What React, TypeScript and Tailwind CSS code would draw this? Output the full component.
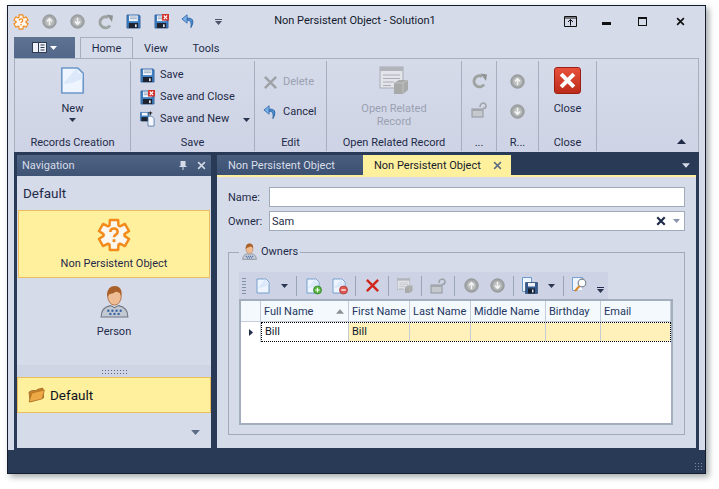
import type { ReactNode } from 'react';

// six-lobed gear outline used for the app logo and the nav item
const gearPath = (() => {
  const pts: string[] = [];
  for (let i = 0; i < 6; i++) {
    const a = (i * Math.PI) / 3 - Math.PI / 2;
    const step = [[-0.44, 7.4], [-0.27, 11], [0.27, 11], [0.44, 7.4]] as const;
    step.forEach(([d, r]) => {
      pts.push(`${(12 + Math.cos(a + d) * r).toFixed(2)} ${(12 + Math.sin(a + d) * r).toFixed(2)}`);
    });
  }
  return 'M' + pts.join('L') + 'Z';
})();

function Gear({ size }: { size: number }) {
  return (
    <svg width={size} height={size} viewBox="0 0 24 24">
      <path d={gearPath} fill="#fbf6ee" stroke="#f28a1c" strokeWidth="1.7" strokeLinejoin="round" />
      <path d="M9.400 9.800c0-3.200 5.200-3.200 5.200 0 0 2-2.600 1.900-2.600 3.700" fill="none" stroke="#f28a1c" strokeWidth="1.8" />
      <rect x="11" y="15" width="2" height="2" fill="#f28a1c" />
    </svg>
  );
}

function Floppy({ size = 16, x = false }: { size?: number; x?: boolean }) {
  return (
    <svg width={size} height={size} viewBox="0 0 16 16">
      <path d="M1 1h13l1 1v13H1z" fill="#3f7fc4" stroke="#2b5c95" strokeWidth="0.8" />
      <rect x="3.200" y="1.600" width="9.400" height="6" fill="#f3f6fb" />
      <path d="M4 3.200h7.600M4 5h7.600" stroke="#7e93ad" strokeWidth="0.8" />
      <rect x="3" y="9.600" width="10" height="5.400" fill="#1d2430" />
      <rect x="9.600" y="11" width="1.800" height="3" fill="#d9e2ee" />
      {x && (
        <>
          <rect x="8.600" y="0" width="7.400" height="7" fill="#d3302a" />
          <path d="M10.400 1.600l3.600 3.800M14 1.600l-3.600 3.800" stroke="#fff" strokeWidth="1.200" />
        </>
      )}
    </svg>
  );
}

function SaveNew() {
  return (
    <svg width="16" height="16" viewBox="0 0 16 16">
      <path d="M0.500 1h9v9h-9z" fill="#3f7fc4" stroke="#2b5c95" strokeWidth="0.600" />
      <rect x="2" y="1.400" width="6" height="3" fill="#f3f6fb" />
      <rect x="1.500" y="6" width="7" height="4.400" fill="#1d2430" />
      <path d="M8.500 5h4l2.500 2.500V15.500H8.500z" fill="#f4f8fe" stroke="#3f6c9e" strokeWidth="0.800" />
      <path d="M9 1.500h4M11 0v4" stroke="#111" strokeWidth="1" />
    </svg>
  );
}

function DocFloppy() {
  return (
    <svg width="16" height="17" viewBox="0 0 16 17">
      <path d="M0.500 0.500h9v14h-9z" fill="#eef5fe" stroke="#6b98c9" />
      <path d="M3.500 5.500H15.500v11H3.500z" fill="#35598c" stroke="#1f3a63" strokeWidth="0.600" />
      <rect x="6" y="6" width="7" height="3.500" fill="#eef2f8" />
      <rect x="6" y="11.500" width="7" height="5" fill="#16202f" />
      <rect x="10" y="12.500" width="1.500" height="3" fill="#d9e2ee" />
    </svg>
  );
}

function RoundArrow({ up, size = 15 }: { up: boolean; size?: number }) {
  return (
    <svg width={size} height={size} viewBox="0 0 16 16">
      <circle cx="8" cy="8" r="7.200" fill="#a3a6a6" stroke="#8b8e8f" strokeWidth="0.800" />
      <circle cx="8" cy="8" r="4.600" fill="#bcbfbf" />
      <path d={up ? 'M8 12V5.500M5.300 8L8 5l2.700 3' : 'M8 4v6.500M5.300 8L8 11l2.700-3'} fill="none" stroke="#f3f3f3" strokeWidth="1.600" />
    </svg>
  );
}

function Redo({ size = 16 }: { size?: number }) {
  return (
    <svg width={size} height={size} viewBox="0 0 16 16">
      <path d="M13 11.500A5.500 5.500 0 1 1 11 3.400" fill="none" stroke="#9ea2a1" strokeWidth="3" />
      <path d="M9.500 0.500L16 1.500l-1 6.500z" fill="#8f9392" />
    </svg>
  );
}

function Undo({ size = 16 }: { size?: number }) {
  return (
    <svg width={size} height={size} viewBox="0 0 16 16">
      <path d="M3 4.500h5.500c4.500 0 5.500 4.500 2 10 0 0 1-4-.5-6.500-.8-1.300-3-1.200-5-1.200" fill="#4f8fd6" stroke="#28609f" strokeWidth="1" strokeLinejoin="round" />
      <path d="M6.500 0.800L1 5.300l5.500 4.500z" fill="#7ab0ea" stroke="#28609f" strokeWidth="0.800" strokeLinejoin="round" />
    </svg>
  );
}

function Caret({ color = '#2a3650', w = 7, dim = 4, up }: { color?: string; w?: number; dim?: number; up?: boolean }) {
  return (
    <svg width={w} height={dim} viewBox="0 0 7 4">
      <path d={up ? 'M0 4h7L3.500 0z' : 'M0 0h7L3.500 4z'} fill={color} />
    </svg>
  );
}

function Doc({ w = 14, h = 16, badge }: { w?: number; h?: number; badge?: 'add' | 'del' }) {
  return (
    <svg width={w} height={h} viewBox="0 0 14 16" className="overflow-visible">
      <path d="M1 1h9l3 3v11H1z" fill="#eef5fe" stroke="#6b98c9" strokeWidth="0.900" strokeLinejoin="round" />
      <path d="M1.500 10L9 1.500h1V4h2.500v3C9 9 5 10 1.500 10z" fill="#dbe9fa" />
      {badge === 'add' && (
        <>
          <circle cx="11.500" cy="12" r="4" fill="#57b53e" stroke="#2c7a22" strokeWidth="0.700" />
          <path d="M9.300 12h4.400M11.500 9.800v4.400" stroke="#fff" strokeWidth="1.100" />
        </>
      )}
      {badge === 'del' && (
        <>
          <circle cx="11.500" cy="12" r="4" fill="#dd5a52" stroke="#a72e28" strokeWidth="0.700" />
          <path d="M9.300 12h4.400" stroke="#fff" strokeWidth="1.300" />
        </>
      )}
    </svg>
  );
}

function Person({ size }: { size: number }) {
  return (
    <svg width={size} height={size} viewBox="0 0 32 32">
      <path d="M3 31c0-7 4-10 9-11l4 2 4-2c5 1 9 4 9 11z" fill="#c3c9d2" stroke="#6e7682" strokeWidth="1" />
      <g fill="#3d68a8">
        <circle cx="10" cy="25" r="1.200" />
        <circle cx="14" cy="25" r="1.200" />
        <circle cx="18" cy="25" r="1.200" />
        <circle cx="22" cy="25" r="1.200" />
        <circle cx="12" cy="28" r="1.200" />
        <circle cx="16" cy="28" r="1.200" />
        <circle cx="20" cy="28" r="1.200" />
      </g>
      <ellipse cx="16" cy="11" rx="6.500" ry="8.500" fill="#efbd93" stroke="#a8673a" strokeWidth="0.800" />
      <path d="M9 12C8 4 12 1 16.500 1 21 1 24 5 22.500 11 22 7 19 6.500 17 6.500c-2 2-5 2-6 2.500-1 1-2 3-2 3z" fill="#a9602a" />
    </svg>
  );
}

function Folder() {
  return (
    <svg width="17" height="16" viewBox="0 0 17 16">
      <path d="M1 5l3-1.500h4l1-1 5.500-1.500 1 2v8L2 15z" fill="#c67d28" stroke="#8a5518" strokeWidth="0.600" />
      <path d="M1 15L4 6l12.500-3L14 12z" fill="#eda945" stroke="#a76b1e" strokeWidth="0.600" />
    </svg>
  );
}

function RelatedIcon({ size = 30 }: { size?: number }) {
  return (
    <svg width={size} height={size} viewBox="0 0 30 30">
      <rect x="1" y="1" width="23" height="21" fill="#e3e5ea" stroke="#a7abb3" />
      <rect x="1" y="1" width="23" height="4" fill="#b1b5bb" />
      <path d="M4 9h17M4 12.500h17M4 16h11M4 19.500h8" stroke="#a9adb4" strokeWidth="1" />
      <path d="M15 17l5-3h9v10l-5 4h-9z" fill="#a7aaa9" />
      <path d="M15 17h9v11M24 17l5-3" fill="none" stroke="#c7c9c9" strokeWidth="0.800" />
    </svg>
  );
}

function LinkBox({ size = 16 }: { size?: number }) {
  return (
    <svg width={size} height={size} viewBox="0 0 16 16">
      <rect x="1" y="7" width="11" height="8" fill="#c5c8cd" stroke="#92969c" />
      <rect x="1" y="7" width="11" height="2" fill="#a4a7ad" />
      <path d="M9 5c0-5 6-5 6-1 0 2-2 2.500-3 2.500" fill="none" stroke="#9da1a5" strokeWidth="1.500" />
    </svg>
  );
}

function BigX({ size, color, weight = 2.6 }: { size: number; color: string; weight?: number }) {
  return (
    <svg width={size} height={size} viewBox="0 0 16 16">
      <path d="M2 2l12 12M14 2L2 14" stroke={color} strokeWidth={weight} />
    </svg>
  );
}

function Magnifier() {
  return (
    <svg width="16" height="17" viewBox="0 0 16 17">
      <path d="M0.500 0.500h10v3M0.500 0.500v13h5" fill="#f3f8fe" stroke="#6b98c9" strokeWidth="0.900" />
      <rect x="1" y="1" width="9" height="12" fill="#eef5fe" />
      <circle cx="10" cy="6" r="3.800" fill="#fff" stroke="#7d8590" strokeWidth="1.200" />
      <path d="M7.500 9L3 14" stroke="#d98a2a" strokeWidth="2" />
    </svg>
  );
}

function RibbonGroup({ w, label, children }: { w: number; label: string; children?: ReactNode }) {
  return (
    <div className="mt-[2px] flex h-[90px] shrink-0 flex-col border-r border-[#a5afbd]" style={{ width: w }}>
      <div className="flex-1">{children}</div>
      <div className="h-[17px] whitespace-nowrap pt-[1px] text-center leading-[16px]">{label}</div>
    </div>
  );
}

function RowBtn({ icon, label, dim, trail }: { icon: ReactNode; label: string; dim?: boolean; trail?: boolean }) {
  return (
    <div className={`flex h-[22px] items-center gap-[5px] whitespace-nowrap ${dim ? 'text-[#9aa1b1]' : ''}`}>
      <span className="flex w-[15px] justify-center">{icon}</span>
      <span>{label}</span>
      {trail && <span className="ml-[9px] mt-[1px] flex"><Caret /></span>}
    </div>
  );
}

function Sep() {
  return <div className="mx-[8px] h-[20px] w-px bg-[#9aa5b4]" />;
}

function ToolCell({ w, children }: { w: number; children: ReactNode }) {
  return <div className="flex items-center justify-center" style={{ width: w }}>{children}</div>;
}

const columns = [
  { title: 'Full Name', w: 88, sort: true },
  { title: 'First Name', w: 61 },
  { title: 'Last Name', w: 61 },
  { title: 'Middle Name', w: 75 },
  { title: 'Birthday', w: 55 },
  { title: 'Email', w: 70 },
];

export default function App() {
  return (
    <div className="h-[489px] w-[719px] overflow-hidden bg-white pl-[7px] pt-[5px] font-['Roboto',sans-serif] text-[11px] text-[#1f2b49]">
      <div className="flex h-[469px] w-[699px] flex-col border border-[#141d2c] bg-[#d6dbea] shadow-[3px_3px_6px_rgba(60,70,70,0.45)]">
        {/* Title bar */}
        <div className="flex h-[31px] shrink-0 items-center pl-[5px]">
          <div className="flex w-[16px] justify-center"><Gear size={18} /></div>
          <div className="ml-[6px] flex items-center">
            <ToolCell w={28}><RoundArrow up /></ToolCell>
            <ToolCell w={28}><RoundArrow up={false} /></ToolCell>
            <ToolCell w={28}><Redo /></ToolCell>
            <ToolCell w={28}><Floppy size={15} /></ToolCell>
            <ToolCell w={28}><Floppy size={15} x /></ToolCell>
            <ToolCell w={26}><Undo size={15} /></ToolCell>
            <ToolCell w={34}>
              <div className="flex flex-col gap-[1px]">
                <div className="h-px w-[7px] bg-[#4b5567]" />
                <Caret color="#4b5567" />
              </div>
            </ToolCell>
          </div>
          <div className="ml-[37px] w-[166px] whitespace-nowrap text-center text-[#111a2c]">Non Persistent Object - Solution1</div>
          <div className="ml-[114px] flex items-center text-[#111]">
            <ToolCell w={36}>
              <svg width="13" height="11" viewBox="0 0 13 11">
                <path d="M0.500 0.500h12v10H.5zM0 2h13M6.500 9.500V3.500M4 6l2.500-2.500L9 6" fill="none" stroke="#111" />
              </svg>
            </ToolCell>
            <ToolCell w={36}><div className="mt-[3px] h-[3px] w-[9px] bg-[#111]" /></ToolCell>
            <ToolCell w={36}><div className="h-[9px] w-[9px] border border-t-2 border-[#111]" /></ToolCell>
            <ToolCell w={40}><BigX size={9} color="#111" weight={3} /></ToolCell>
          </div>
        </div>

        {/* Tabs */}
        <div className="flex h-[21px] shrink-0 pl-[6px]">
          <div className="flex w-[61px] items-center justify-center gap-[3px] bg-gradient-to-b from-[#5f7392] to-[#52678a]">
            <svg width="15" height="11" viewBox="0 0 15 11">
              <rect x="0.500" y="0.500" width="14" height="10" fill="#eef1f7" stroke="#2c3a52" />
              <path d="M6.500 0.500v10M8.500 3h4M8.500 5.500h4M8.500 8h4" stroke="#2c3a52" />
            </svg>
            <Caret color="#fff" />
          </div>
          <div className="ml-[5px] flex w-[53px] items-center justify-center border border-b-0 border-[#a5afbd] bg-[#d6dbea] pt-[3px]">Home</div>
          <div className="flex w-[46px] items-center justify-center pt-[3px]">View</div>
          <div className="flex w-[54px] items-center justify-center pt-[3px]">Tools</div>
        </div>

        {/* Ribbon */}
        <div className="mx-[6px] flex h-[94px] shrink-0 border-x border-t border-[#a5afbd] bg-gradient-to-b from-[#d6dbea] to-[#ced3e5]">
          <RibbonGroup w={116} label="Records Creation">
            <div className="flex flex-col items-center pt-[5px]">
              <Doc w={25} h={29} />
              <div className="mt-[7px] leading-[14px]">New</div>
              <div className="mt-[2px] flex"><Caret /></div>
            </div>
          </RibbonGroup>
          <RibbonGroup w={124} label="Save">
            <div className="pl-[9px] pt-[3px]">
              <RowBtn icon={<Floppy size={15} />} label="Save" />
              <RowBtn icon={<Floppy size={15} x />} label="Save and Close" />
              <RowBtn icon={<SaveNew />} label="Save and New" trail />
            </div>
          </RibbonGroup>
          <RibbonGroup w={72} label="Edit">
            <div className="pl-[8px] pt-[10px]">
              <div className="h-[30px]"><RowBtn icon={<BigX size={15} color="#9ea2a6" />} label="Delete" dim /></div>
              <RowBtn icon={<Undo size={15} />} label="Cancel" />
            </div>
          </RibbonGroup>
          <RibbonGroup w={135} label="Open Related Record">
            <div className="flex flex-col items-center pt-[5px] leading-[13px] text-[#9aa1b1]">
              <RelatedIcon />
              <div className="mt-[6px]">Open Related</div>
              <div>Record</div>
            </div>
          </RibbonGroup>
          <RibbonGroup w={35} label="...">
            <div className="flex flex-col items-center gap-[13px] pt-[12px]">
              <Redo />
              <LinkBox />
            </div>
          </RibbonGroup>
          <RibbonGroup w={42} label="R...">
            <div className="flex flex-col items-center gap-[15px] pt-[13px]">
              <RoundArrow up />
              <RoundArrow up={false} />
            </div>
          </RibbonGroup>
          <RibbonGroup w={58} label="Close">
            <div className="flex flex-col items-center pt-[6px]">
              <div className="flex h-[27px] w-[27px] items-center justify-center rounded-[3px] border border-[#9c1e12] bg-gradient-to-b from-[#e8513c] to-[#bc2a18]">
                <BigX size={17} color="#fff" weight={3.8} />
              </div>
              <div className="mt-[8px] leading-[14px]">Close</div>
            </div>
          </RibbonGroup>
          <div className="flex flex-1 items-end justify-end pb-[8px] pr-[12px]">
            <svg width="9" height="5" viewBox="0 0 9 5"><path d="M0 5h9L4.500 0z" fill="#1f2b49" /></svg>
          </div>
        </div>

        {/* Main area */}
        <div className="mx-[6px] flex min-h-0 flex-1 gap-[6px] bg-[#293a56] px-[3px] pb-[2px] pt-[3px]">
          {/* Navigation */}
          <div className="flex w-[194px] shrink-0 flex-col bg-[#d6dbea]">
            <div className="flex h-[21px] items-center justify-between bg-gradient-to-b from-[#506584] to-[#3f5475] pl-[5px] pr-[5px] text-[#d5dbe8]">
              <span className="pt-[2px]">Navigation</span>
              <div className="flex items-center gap-[10px]">
                <svg width="8" height="9" viewBox="0 0 8 9">
                  <path d="M1.500 0h5v5h1v1H4.500v3h-1V6H.5V5h1z" fill="#d5dbe8" />
                </svg>
                <BigX size={9} color="#d5dbe8" />
              </div>
            </div>
            <div className="flex h-[34px] shrink-0 items-center pl-[6px] pt-[2px] text-[13.5px] leading-none">Default</div>
            <div className="mx-px flex h-[68px] shrink-0 flex-col items-center border border-[#e9bd5d] bg-[#fff09d] pt-[7px]">
              <Gear size={34} />
              <div className="mt-[5px] leading-[14px]">Non Persistent Object</div>
            </div>
            <div className="flex h-[87px] shrink-0 flex-col items-center pt-[7px]">
              <Person size={33} />
              <div className="mt-[7px] leading-[14px]">Person</div>
            </div>
            <div className="flex h-[12px] shrink-0 items-center justify-center bg-[#d0d5e6]">
              <div className="h-[5px] w-[26px] bg-[radial-gradient(#5d6a80_0.7px,transparent_0.8px)] bg-[length:3px_3px]" />
            </div>
            <div className="flex h-[36px] shrink-0 items-center gap-[5px] border border-[#e9bd5d] bg-[#fff09d] pl-[10px] text-[13.5px] text-[#0c1220]">
              <Folder />
              <span>Default</span>
            </div>
            <div className="flex flex-1 justify-end pr-[11px] pt-[17px]">
              <Caret color="#5b6a85" w={9} dim={5} />
            </div>
          </div>

          {/* Document */}
          <div className="flex w-[479px] shrink-0 flex-col">
            <div className="flex h-[20px] shrink-0">
              <div className="flex w-[146px] items-center bg-gradient-to-b from-[#4a5e7e] to-[#3c5072] pl-[11px] pt-[3px] text-[#d8deea]">Non Persistent Object</div>
              <div className="flex w-[148px] items-center justify-between bg-[#fff09d] pl-[11px] pr-[9px] text-[#141c2e]">
                <span className="pt-[3px]">Non Persistent Object</span>
                <BigX size={9} color="#5b6a85" />
              </div>
              <div className="flex flex-1 items-center justify-end pr-[6px]">
                <Caret color="#d5dbe8" w={8} dim={5} />
              </div>
            </div>
            <div className="flex min-h-0 flex-1 flex-col border-t-2 border-[#fff09d] bg-[#d6dbea] pl-[11px] pr-[11px] pt-[10px]">
              <div className="flex h-[20px] items-center">
                <div className="w-[41px] pt-[3px]">Name:</div>
                <div className="h-full flex-1 border border-[#9fabb9] bg-white" />
              </div>
              <div className="mt-[4px] flex h-[20px] items-center">
                <div className="w-[41px] pt-[3px]">Owner:</div>
                <div className="flex h-full flex-1 items-center border border-[#9fabb9] bg-white pl-[2px] pr-[4px]">
                  <span className="flex-1 pt-[3px]">Sam</span>
                  <BigX size={10} color="#1f2b49" weight={3.4} />
                  <span className="ml-[7px] flex"><Caret color="#8592a8" /></span>
                </div>
              </div>

              {/* Owners group */}
              <div className="mt-[21px] h-[183px] w-[457px] border border-[#9fabb9] px-[10px] pt-[19px]">
                <div className="-mt-[30px] mb-[12px] flex h-[18px] w-fit items-center gap-[3px] bg-[#d6dbea] px-[2px]">
                  <Person size={17} />
                  <span className="pt-[3px]">Owners</span>
                </div>
                <div className="flex h-[27px] w-[369px] items-center bg-[#cdd2e4] pl-[3px]">
                  <div className="h-[18px] w-[4px] bg-[radial-gradient(#8391a6_0.7px,transparent_0.8px)] bg-[length:2px_3px]" />
                  <ToolCell w={34}><Doc /></ToolCell>
                  <ToolCell w={8}><Caret /></ToolCell>
                  <Sep />
                  <ToolCell w={16}><Doc badge="add" /></ToolCell>
                  <div className="w-[10px]" />
                  <ToolCell w={16}><Doc badge="del" /></ToolCell>
                  <Sep />
                  <ToolCell w={16}><BigX size={15} color="#d0261d" /></ToolCell>
                  <Sep />
                  <ToolCell w={16}><RelatedIcon size={16} /></ToolCell>
                  <Sep />
                  <ToolCell w={16}><LinkBox /></ToolCell>
                  <Sep />
                  <ToolCell w={16}><RoundArrow up /></ToolCell>
                  <div className="w-[10px]" />
                  <ToolCell w={16}><RoundArrow up={false} /></ToolCell>
                  <Sep />
                  <ToolCell w={16}><DocFloppy /></ToolCell>
                  <div className="w-[9px]" />
                  <ToolCell w={8}><Caret /></ToolCell>
                  <Sep />
                  <ToolCell w={16}><Magnifier /></ToolCell>
                  <div className="ml-[9px] mt-[8px] flex flex-col gap-[1px]">
                    <div className="h-px w-[7px] bg-[#1f2b49]" />
                    <Caret />
                  </div>
                </div>

                {/* Grid */}
                <div className="h-[126px] w-[434px] border-2 border-[#a3aebc] bg-white">
                  <div className="flex h-[21px] bg-[#f4f9fe]">
                    <div className="w-[20px] border-b border-r border-[#c4ccd8]" />
                    {columns.map((c) => (
                      <div
                        key={c.title}
                        className="flex items-center justify-between border-b border-r border-[#c4ccd8] pl-[3px] pr-[4px] text-[#25365f]"
                        style={{ width: c.w }}
                      >
                        <span className="whitespace-nowrap pt-[3px]">{c.title}</span>
                        {c.sort && <Caret color="#8a8f96" w={8} dim={5} up />}
                      </div>
                    ))}
                  </div>
                  <div className="flex h-[20px]">
                    <div className="flex w-[20px] items-center justify-center border-r border-[#c4ccd8]">
                      <svg width="4" height="7" viewBox="0 0 4 7"><path d="M0 0l4 3.500L0 7z" fill="#1f2b49" /></svg>
                    </div>
                    <div className="flex w-[410px] border border-dotted border-black">
                      {columns.map((c, i) => (
                        <div
                          key={c.title}
                          className={`flex items-center border-r border-[#c4ccd8] pl-[3px] text-[#111a2c] last:border-r-0 ${i === 0 ? 'bg-white' : 'bg-[#fff1b9]'}`}
                          style={{ width: i === 0 ? c.w - 1 : i === 5 ? c.w - 1 : c.w }}
                        >
                          {i < 2 ? 'Bill' : ''}
                        </div>
                      ))}
                    </div>
                  </div>
                </div>
              </div>
            </div>
          </div>
        </div>

        {/* Status bar */}
        <div className="flex h-[23px] shrink-0 items-end justify-end bg-[#293a56] pb-[3px] pr-[3px]">
          <div className="h-[8px] w-[8px] bg-[radial-gradient(#7a8aa5_0.7px,transparent_0.8px)] bg-[length:3px_3px]" />
        </div>
      </div>
    </div>
  );
}
